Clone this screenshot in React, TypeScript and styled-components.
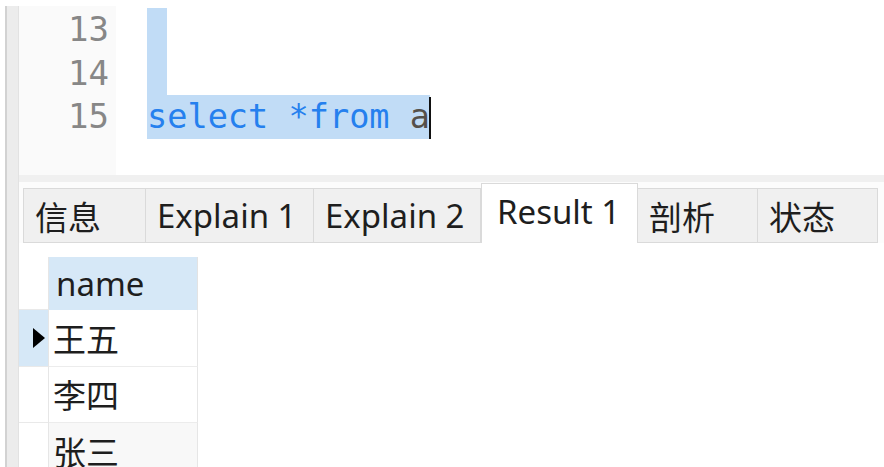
import { Fragment } from 'react';
import styled, { createGlobalStyle } from 'styled-components';

const GlobalStyle = createGlobalStyle`
  html, body {
    margin: 0;
    padding: 0;
    background: #ffffff;
  }
  body {
    width: 884px;
    height: 467px;
    overflow: hidden;
  }
`;

const Window = styled.div`
  width: 884px;
  height: 467px;
  display: flex;
  padding-top: 6px;
  box-sizing: border-box;
  background: #ffffff;
`;

const SideStrip = styled.div`
  width: 11px;
  margin-left: 5px;
  border-left: 2px solid #d2d2d2;
  border-right: 1px solid #e2e2e2;
  background: #ececec;
  flex-shrink: 0;
`;

const Main = styled.div`
  flex: 1;
  display: flex;
  flex-direction: column;
  min-width: 0;
`;

const Editor = styled.div`
  height: 169px;
  display: flex;
  flex-shrink: 0;
`;

const Gutter = styled.div`
  width: 97px;
  background: #fafafa;
  padding: 2px 7px 0 0;
  box-sizing: border-box;
  text-align: right;
  font-family: "DejaVu Sans Mono", "Liberation Mono", monospace;
  font-size: 34px;
  color: #878787;
`;

const LineNo = styled.div`
  height: 43.5px;
  line-height: 43.5px;
`;

const Code = styled.div`
  flex: 1;
  padding: 2px 0 0 31px;
  font-family: "DejaVu Sans Mono", "Liberation Mono", monospace;
  font-size: 33.6px;
  white-space: pre;
`;

const Line = styled.div`
  height: 43.5px;
  line-height: 43.5px;
  display: flex;
  align-items: stretch;
`;

const Selection = styled.span<{ $empty?: boolean }>`
  display: inline-block;
  background: #c1dcf6;
  width: ${(p) => (p.$empty ? '1ch' : 'auto')};
  position: relative;
`;

const Keyword = styled.span`
  color: #2580ee;
`;

const Ident = styled.span`
  color: #55504a;
`;

const Caret = styled.span`
  position: absolute;
  right: -1px;
  top: 2px;
  bottom: 0;
  width: 2px;
  background: #111111;
`;

const Band = styled.div`
  height: 7px;
  background: #f0f0f0;
  flex-shrink: 0;
`;

const TabBar = styled.div`
  height: 61px;
  display: flex;
  align-items: flex-end;
  padding-left: 4px;
  flex-shrink: 0;
  background: #fcfcfc;
`;

const Tab = styled.div<{ $w: number; $active?: boolean }>`
  width: ${(p) => p.$w}px;
  height: ${(p) => (p.$active ? 60 : 55)}px;
  box-sizing: border-box;
  border: 1px solid #dadada;
  border-bottom: ${(p) => (p.$active ? 'none' : '1px solid #dadada')};
  border-left: ${(p) => (p.$active ? '1px solid #dadada' : 'none')};
  background: ${(p) => (p.$active ? '#ffffff' : '#f0f0f0')};
  display: flex;
  align-items: ${(p) => (p.$active ? 'flex-start' : 'center')};
  padding: ${(p) => (p.$active ? '5px 0 0 15px' : '0 0 0 11px')};
  font-family: "Noto Sans", "Noto Sans CJK SC", sans-serif;
  font-size: 33px;
  color: #1e1e1e;
  white-space: nowrap;

  &:first-child {
    border-left: 1px solid #dadada;
  }
`;

const GridArea = styled.div`
  flex: 1;
  padding-top: 14px;
  background: #ffffff;
`;

const Grid = styled.div`
  display: grid;
  grid-template-columns: 30px 149px;
  grid-auto-rows: 56.5px;
  grid-template-rows: 53px;
`;

const Indicator = styled.div<{ $current?: boolean }>`
  background: ${(p) => (p.$current ? '#d6e8f7' : '#ffffff')};
  border-bottom: 1px solid #e9e9e9;
  border-right: 1px solid #e6e6e6;
  display: flex;
  align-items: center;
  justify-content: flex-end;
  padding-right: 3px;
`;

const HeaderCell = styled.div`
  background: #d6e8f7;
  border-right: 1px solid #e3e3e3;
  display: flex;
  align-items: center;
  padding-left: 7px;
  font-family: "Noto Sans", "Noto Sans CJK SC", sans-serif;
  font-size: 33px;
  color: #1e1e1e;
`;

const Cell = styled.div<{ $alt?: boolean }>`
  background: ${(p) => (p.$alt ? '#f8f8f8' : '#ffffff')};
  border-bottom: 1px solid #ececec;
  border-right: 1px solid #e6e6e6;
  display: flex;
  align-items: center;
  padding-left: 4px;
  font-family: "Noto Sans CJK SC", "Noto Sans", sans-serif;
  font-size: 33px;
  color: #1e1e1e;
`;

const tabs = [
  { label: '信息', w: 123 },
  { label: 'Explain 1', w: 168 },
  { label: 'Explain 2', w: 167 },
  { label: 'Result 1', w: 157, active: true },
  { label: '剖析', w: 120 },
  { label: '状态', w: 120 },
];

const rows = ['王五', '李四', '张三'];

export default function App() {
  return (
    <>
      <GlobalStyle />
      <Window>
        <SideStrip />
        <Main>
          <Editor>
            <Gutter>
              <LineNo>13</LineNo>
              <LineNo>14</LineNo>
              <LineNo>15</LineNo>
            </Gutter>
            <Code>
              <Line>
                <Selection $empty />
              </Line>
              <Line>
                <Selection $empty />
              </Line>
              <Line>
                <Selection>
                  <Keyword>select *from</Keyword> <Ident>a</Ident>
                  <Caret />
                </Selection>
              </Line>
            </Code>
          </Editor>
          <Band />
          <TabBar>
            {tabs.map((t) => (
              <Tab key={t.label} $w={t.w} $active={t.active}>
                {t.label}
              </Tab>
            ))}
          </TabBar>
          <GridArea>
            <Grid>
              <Indicator />
              <HeaderCell>name</HeaderCell>
              {rows.map((r, i) => (
                <Fragment key={r}>
                  <Indicator $current={i === 0}>
                    {i === 0 && (
                      <svg width="12" height="20" viewBox="0 0 12 20">
                        <path d="M0 0 L12 10 L0 20 Z" fill="#000" />
                      </svg>
                    )}
                  </Indicator>
                  <Cell $alt={i === 2}>{r}</Cell>
                </Fragment>
              ))}
            </Grid>
          </GridArea>
        </Main>
      </Window>
    </>
  );
}
